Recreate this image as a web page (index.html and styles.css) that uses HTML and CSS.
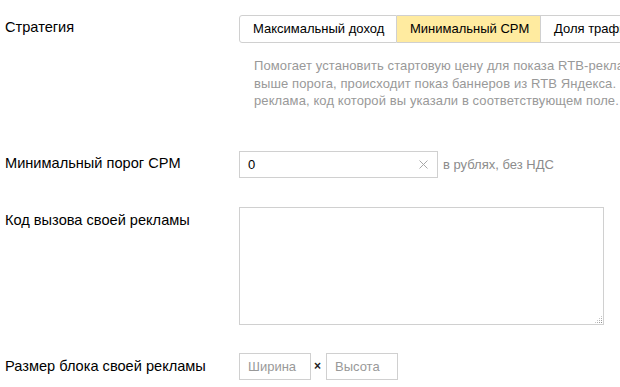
FILE: index.html
```html
<!DOCTYPE html>
<html lang="ru">
<head>
    <meta charset="UTF-8">
    <title>Настройки блока</title>
    <link rel="stylesheet" href="styles.css">
</head>
<body>
    <div class="form">
        <div class="row row-strategy">
            <div class="label">Стратегия</div>
            <div class="control">
                <div class="tabs">
                    <div class="tab tab-first">Максимальный доход</div>
                    <div class="tab tab-active">Минимальный CPM</div>
                    <div class="tab">Доля трафика</div>
                </div>
                <div class="help">
                    Помогает установить стартовую цену для показа RTB-рекламы. Если цена<br>
                    выше порога, происходит показ баннеров из RTB Яндекса. Если ниже — показывается<br>
                    реклама, код которой вы указали в соответствующем поле.
                </div>
            </div>
        </div>

        <div class="row row-cpm">
            <div class="label">Минимальный порог CPM</div>
            <div class="control control-inline">
                <div class="input input-cpm">
                    <span class="input-value">0</span>
                    <svg class="input-clear" width="9" height="9" viewBox="0 0 9 9">
                        <path d="M0.5 0.5 L8.5 8.5 M8.5 0.5 L0.5 8.5" stroke="#a8a8a8" stroke-width="1" fill="none"/>
                    </svg>
                </div>
                <span class="hint">в рублях, без НДС</span>
            </div>
        </div>

        <div class="row row-code">
            <div class="label">Код вызова своей рекламы</div>
            <div class="control">
                <div class="textarea-wrap">
                    <textarea class="textarea"></textarea>
                    <svg class="grip" width="9" height="9" viewBox="0 0 9 9">
                        <rect x="7" y="1" width="1" height="1" fill="#c8c8c8"/>
                        <rect x="5" y="3" width="1" height="1" fill="#c8c8c8"/>
                        <rect x="7" y="3" width="1" height="1" fill="#b0b0b0"/>
                        <rect x="3" y="5" width="1" height="1" fill="#c8c8c8"/>
                        <rect x="5" y="5" width="1" height="1" fill="#b0b0b0"/>
                        <rect x="7" y="5" width="1" height="1" fill="#a0a0a0"/>
                        <rect x="1" y="7" width="1" height="1" fill="#c8c8c8"/>
                        <rect x="3" y="7" width="1" height="1" fill="#b0b0b0"/>
                        <rect x="5" y="7" width="1" height="1" fill="#a0a0a0"/>
                        <rect x="7" y="7" width="1" height="1" fill="#909090"/>
                    </svg>
                </div>
            </div>
        </div>

        <div class="row row-size">
            <div class="label">Размер блока своей рекламы</div>
            <div class="control control-inline control-size">
                <div class="input input-size"><span class="placeholder">Ширина</span></div>
                <span class="times">×</span>
                <div class="input input-size"><span class="placeholder">Высота</span></div>
            </div>
        </div>
    </div>
</body>
</html>
```

FILE: styles.css
```css
* {
    margin: 0;
    padding: 0;
    box-sizing: border-box;
}
html, body {
    overflow: hidden;
}
body {
    font-family: 'Liberation Sans', Arial, sans-serif;
    background: #ffffff;
    color: #000000;
    width: 620px;
    height: 387px;
}
.form {
    padding: 15px 0 0 5px;
}
.row {
    display: grid;
    grid-template-columns: 234px auto;
}
.row-cpm {
    margin-top: 41px;
}
.row-code {
    margin-top: 29px;
}
.row-size {
    margin-top: 28px;
}
.label {
    font-size: 14.6px;
    line-height: 18px;
    padding-top: 3px;
    white-space: nowrap;
}
.row-code .label,
.row-size .label {
    padding-top: 4px;
}
.control {
    min-width: 0;
}
.control-inline {
    display: flex;
    align-items: center;
}
/* Strategy switcher */
.tabs {
    display: flex;
    white-space: nowrap;
}
.tab {
    font-size: 13px;
    line-height: 26px;
    height: 28px;
    padding: 0 13px;
    border: 1px solid #d0d0d0;
    border-left: none;
    background: #ffffff;
}
.tab-first {
    border-left: 1px solid #d0d0d0;
    border-radius: 3px 0 0 3px;
    width: 158px;
}
.tab-active {
    background: #ffeba0;
    width: 144px;
}
.help {
    margin-top: 14px;
    padding-left: 15px;
    font-size: 13px;
    line-height: 17.5px;
    letter-spacing: 0.1px;
    color: #999999;
    white-space: nowrap;
}
/* Inputs */
.input {
    height: 27px;
    border: 1px solid #d0d0d0;
    font-size: 13px;
    line-height: 25px;
    padding: 0 8px;
    display: flex;
    align-items: center;
}
.input-cpm {
    width: 199px;
    justify-content: space-between;
    padding-right: 9px;
}
.input-clear {
    display: block;
}
.hint {
    margin-left: 5px;
    font-size: 13px;
    color: #8c8c8c;
}
.textarea-wrap {
    position: relative;
    width: 365px;
    height: 118px;
}
.textarea {
    display: block;
    width: 100%;
    height: 100%;
    border: 1px solid #d0d0d0;
    resize: none;
    outline: none;
    font-family: inherit;
    font-size: 13px;
}
.grip {
    position: absolute;
    right: 1px;
    bottom: 1px;
}
.input-size {
    width: 72px;
}
.placeholder {
    color: #999999;
}
.times {
    width: 15px;
    padding-right: 2px;
    text-align: center;
    font-size: 12px;
    font-weight: bold;
    color: #222222;
}
```
